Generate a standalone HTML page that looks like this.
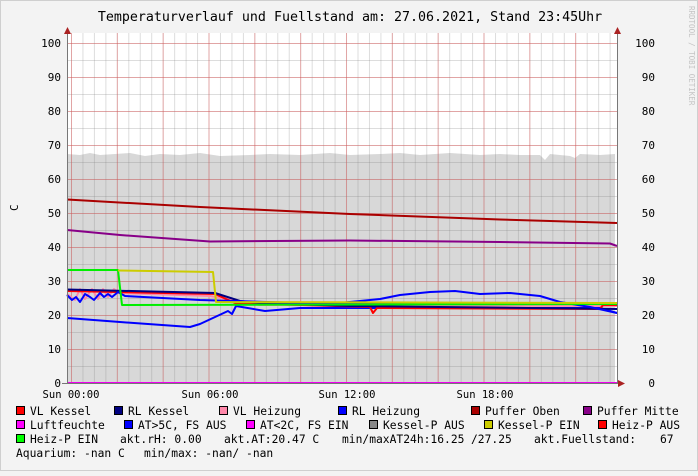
<!DOCTYPE html>
<html><head><style>
html,body{margin:0;padding:0;background:#f3f3f3}
svg text{font-family:"DejaVu Sans Mono","Liberation Mono",monospace;}
</style></head><body>
<svg width="698" height="471" viewBox="0 0 698 471" xmlns="http://www.w3.org/2000/svg">
<defs>
<pattern id="mv" x="71" y="0" width="11.46" height="471" patternUnits="userSpaceOnUse"><rect x="0" y="0" width="1" height="471" fill="rgba(120,120,120,0.25)"/></pattern>
<pattern id="mh" x="0" y="43" width="698" height="17" patternUnits="userSpaceOnUse"><rect x="0" y="0" width="698" height="1" fill="rgba(120,120,120,0.25)"/></pattern>
<pattern id="Mv" x="71" y="0" width="45.83" height="471" patternUnits="userSpaceOnUse"><rect x="0" y="0" width="1" height="471" fill="rgba(230,80,80,0.4)"/></pattern>
<pattern id="Mh" x="0" y="43" width="698" height="34" patternUnits="userSpaceOnUse"><rect x="0" y="0" width="698" height="1" fill="rgba(230,80,80,0.4)"/></pattern>
</defs>
<rect x="0" y="0" width="698" height="471" fill="#f3f3f3"/>
<rect x="0.5" y="0.5" width="697" height="470" fill="none" stroke="#cfcfcf"/>
<rect x="67" y="33" width="550" height="350" fill="#fff"/>
<path d="M67,154 L80,155 L90,153 L100,155 L115,154 L130,153 L145,156 L160,154 L180,155 L200,153 L220,156 L250,155 L270,154 L300,155 L330,153 L350,155 L380,154 L400,153 L420,155 L450,153 L480,155 L500,154 L520,155 L540,155 L545,160 L550,154 L570,156 L575,158 L580,154 L600,155 L615,154 L615,383 L67,383Z" fill="#d8d8d8"/>
<rect x="67" y="33" width="550" height="350" fill="url(#mv)"/>
<rect x="67" y="33" width="550" height="350" fill="url(#mh)"/>
<rect x="67" y="33" width="550" height="351" fill="url(#Mv)"/>
<rect x="67" y="33" width="550" height="351" fill="url(#Mh)"/>
<g fill="none" stroke-width="2" stroke-linejoin="round">
<path d="M67,199.5 L200,207 L350,214 L500,219.5 L617,223" stroke="#aa0000"/>
<path d="M67,230 L120,235 L210,241.5 L350,240.5 L500,242 L610,243.5 L617,246" stroke="#880088"/>
<path d="M67,318 L120,322 L190,327 L200,324 L228,311 L232,314 L236,306 L265,311 L300,308 L600,308 L617,313" stroke="#0000ff"/>
<path d="M330,303 L617,303" stroke="#0000ff"/>
<path d="M67,294 L75,300 L80,289 L85,299 L92,289 L98,299 L103,289 L108,297 L114,289 L118,293 L210,296 L260,305 L617,306" stroke="#ff88aa"/>
<path d="M67,291 L215,294 L235,303 L370,307 L373,313 L377,308 L600,309 L603,305 L617,305" stroke="#ff0000"/>
<path d="M67,289.5 L215,293 L240,301 L260,303 L350,306 L617,309" stroke="#000080"/>
<path d="M67,295 L72,300 L76,297 L80,302 L85,294 L90,297 L94,300 L100,293 L104,297 L108,294 L112,297 L118,292 L125,296 L200,300 L300,303 L340,303 L380,299 L400,295 L430,292 L455,291 L480,294 L510,293 L540,296 L560,302 L590,307 L617,313" stroke="#0000ff"/>
<path d="M67,270 L118,270 L122,305 L617,304" stroke="#00ee00"/>
<path d="M118,270.5 L213,272 L216,302 L617,303" stroke="#cccc00"/>
<path d="M67,383 L617,383" stroke="#ee00ee"/>
</g>
<line x1="67.5" y1="33" x2="67.5" y2="384" stroke="#777"/>
<line x1="617.5" y1="30" x2="617.5" y2="384" stroke="#777"/>
<line x1="62" y1="383.5" x2="622" y2="383.5" stroke="#777"/>
<path d="M614,34 L617.5,27 L621,34Z" fill="#aa2222"/>
<path d="M618,380 L625,383.5 L618,387Z" fill="#aa2222"/>
<path d="M64,34 L67.5,27 L71,34Z" fill="#aa2222"/>
<text x="350" y="21" font-size="13.3" text-anchor="middle" fill="#000">Temperaturverlauf und Fuellstand am: 27.06.2021, Stand 23:45Uhr</text>
<text transform="translate(689,6) rotate(90)" font-size="7.5" fill="#c4c4c4">RRDTOOL / TOBI OETIKER</text>
<text transform="translate(18,211) rotate(-90)" font-size="11" fill="#000">C</text>
<g font-size="11" fill="#000" text-anchor="end">
<text x="61" y="47">100</text><text x="61" y="81">90</text><text x="61" y="115">80</text><text x="61" y="149">70</text><text x="61" y="183">60</text><text x="61" y="217">50</text><text x="61" y="251">40</text><text x="61" y="285">30</text><text x="61" y="319">20</text><text x="61" y="353">10</text><text x="61" y="387">0</text>
<text x="655" y="47">100</text><text x="655" y="81">90</text><text x="655" y="115">80</text><text x="655" y="149">70</text><text x="655" y="183">60</text><text x="655" y="217">50</text><text x="655" y="251">40</text><text x="655" y="285">30</text><text x="655" y="319">20</text><text x="655" y="353">10</text><text x="655" y="387">0</text>
</g>
<g font-size="10.5" fill="#000" text-anchor="middle">
<text x="71" y="398">Sun 00:00</text><text x="210" y="398">Sun 06:00</text><text x="347" y="398">Sun 12:00</text><text x="485" y="398">Sun 18:00</text>
</g>
<g stroke="#000" stroke-width="1">
<rect x="16.5" y="406.5" width="8" height="8" fill="#ff0000"/>
<rect x="114.5" y="406.5" width="8" height="8" fill="#000080"/>
<rect x="219.5" y="406.5" width="8" height="8" fill="#ff88aa"/>
<rect x="338.5" y="406.5" width="8" height="8" fill="#0000ff"/>
<rect x="471.5" y="406.5" width="8" height="8" fill="#aa0000"/>
<rect x="583.5" y="406.5" width="8" height="8" fill="#880088"/>
<rect x="16.5" y="420.5" width="8" height="8" fill="#ff00ff"/>
<rect x="124.5" y="420.5" width="8" height="8" fill="#0000ff"/>
<rect x="246.5" y="420.5" width="8" height="8" fill="#ff00ff"/>
<rect x="369.5" y="420.5" width="8" height="8" fill="#888888"/>
<rect x="484.5" y="420.5" width="8" height="8" fill="#cccc00"/>
<rect x="598.5" y="420.5" width="8" height="8" fill="#ff0000"/>
<rect x="16.5" y="434.5" width="8" height="8" fill="#00ff00"/>
</g>
<g font-size="11.3" fill="#000" xml:space="preserve">
<text x="30" y="415">VL Kessel</text><text x="128" y="415">RL Kessel</text><text x="233" y="415">VL Heizung</text><text x="352" y="415">RL Heizung</text><text x="485" y="415">Puffer Oben</text><text x="597" y="415">Puffer Mitte</text>
<text x="30" y="429">Luftfeuchte</text><text x="138" y="429">AT&gt;5C, FS AUS</text><text x="260" y="429">AT&lt;2C, FS EIN</text><text x="383" y="429">Kessel-P AUS</text><text x="498" y="429">Kessel-P EIN</text><text x="612" y="429">Heiz-P AUS</text>
<text x="30" y="443">Heiz-P EIN</text><text x="120" y="443">akt.rH: 0.00</text><text x="224" y="443">akt.AT:20.47 C</text><text x="342" y="443">min/maxAT24h:16.25</text><text x="471" y="443">/27.25</text><text x="534" y="443">akt.Fuellstand:</text><text x="660" y="443">67</text>
<text x="16" y="457">Aquarium: -nan C</text><text x="144" y="457">min/max: -nan/ -nan</text>
</g>
</svg>
</body></html>
